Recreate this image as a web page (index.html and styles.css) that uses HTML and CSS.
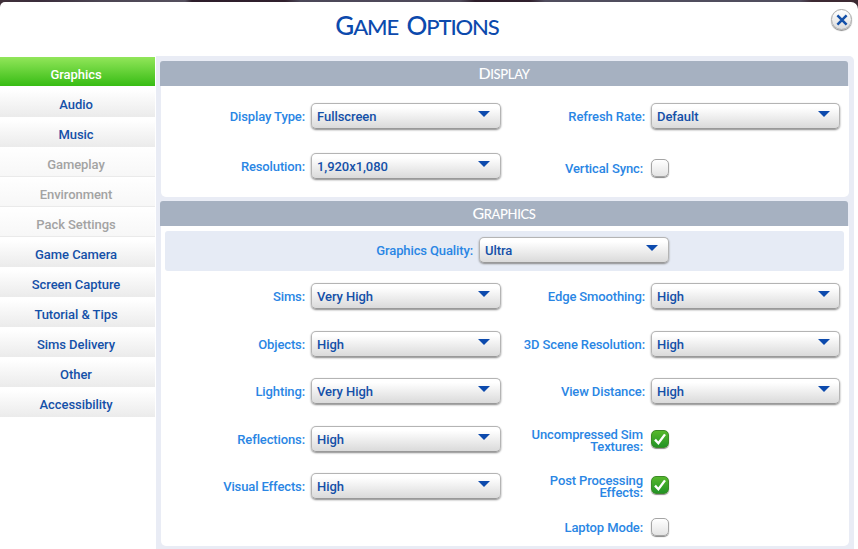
FILE: index.html
```
<!DOCTYPE html>
<html lang="en">
<head>
    <meta charset="UTF-8">
    <meta name="viewport" content="width=device-width, initial-scale=1.0">
    <title>Game Options</title>
    <link rel="stylesheet" href="styles.css">
</head>
<body>
    <div class="dialog">
        <div class="header">
            <h1><span class="cap">G</span>AME <span class="cap">O</span>PTIONS</h1>
            <button class="close">
                <svg width="12" height="12" viewBox="0 0 12 12"><path d="M1.4 1.4L10.6 10.6M10.6 1.4L1.4 10.6" stroke="#1450a8" stroke-width="2.5"/></svg>
            </button>
        </div>
        <div class="main">
            <ul class="menu">
                <li class="active">Graphics</li>
                <li>Audio</li>
                <li>Music</li>
                <li class="disabled">Gameplay</li>
                <li class="disabled">Environment</li>
                <li class="disabled">Pack Settings</li>
                <li>Game Camera</li>
                <li>Screen Capture</li>
                <li>Tutorial &amp; Tips</li>
                <li>Sims Delivery</li>
                <li>Other</li>
                <li>Accessibility</li>
            </ul>
            <div class="content">
                <h2><span class="cap">D</span>ISPLAY</h2>
                <div class="panel display">
                    <div class="cols">
                        <div class="col left">
                            <div class="field"><label>Display Type:</label><div class="select">Fullscreen</div></div>
                            <div class="field"><label>Resolution:</label><div class="select">1,920x1,080</div></div>
                        </div>
                        <div class="col right">
                            <div class="field"><label>Refresh Rate:</label><div class="select">Default</div></div>
                            <div class="field check"><label>Vertical Sync:</label><div class="checkbox"></div></div>
                        </div>
                    </div>
                </div>
                <h2><span class="cap">G</span>RAPHICS</h2>
                <div class="panel graphics">
                    <div class="quality">
                        <div class="field"><label>Graphics Quality:</label><div class="select">Ultra</div></div>
                    </div>
                    <div class="cols">
                        <div class="col left">
                            <div class="field"><label>Sims:</label><div class="select">Very High</div></div>
                            <div class="field"><label>Objects:</label><div class="select">High</div></div>
                            <div class="field"><label>Lighting:</label><div class="select">Very High</div></div>
                            <div class="field"><label>Reflections:</label><div class="select">High</div></div>
                            <div class="field"><label>Visual Effects:</label><div class="select">High</div></div>
                        </div>
                        <div class="col right">
                            <div class="field"><label>Edge Smoothing:</label><div class="select">High</div></div>
                            <div class="field"><label>3D Scene Resolution:</label><div class="select">High</div></div>
                            <div class="field"><label>View Distance:</label><div class="select">High</div></div>
                            <div class="field check">
                                <label>Uncompressed Sim<br>Textures:</label>
                                <div class="checkbox checked"><svg width="14" height="14" viewBox="0 0 14 14"><path d="M2 7.6L5.4 11.2L12 2.4" fill="none" stroke="#fff" stroke-width="2.4"/></svg></div>
                            </div>
                            <div class="field check">
                                <label>Post Processing<br>Effects:</label>
                                <div class="checkbox checked"><svg width="14" height="14" viewBox="0 0 14 14"><path d="M2 7.6L5.4 11.2L12 2.4" fill="none" stroke="#fff" stroke-width="2.4"/></svg></div>
                            </div>
                            <div class="field check"><label>Laptop Mode:</label><div class="checkbox"></div></div>
                        </div>
                    </div>
                </div>
            </div>
        </div>
    </div>
</body>
</html>
```

FILE: styles.css
```
* {
    margin: 0;
    padding: 0;
    box-sizing: border-box;
}
body {
    height: 549px;
    padding-top: 2px;
    overflow: hidden;
    background: linear-gradient(90deg, #40303a 0, #3a2d3b 40px, #4b4452 100px, #55505e 185px, #2d1d2a 192px, #30202d 285px, #4b4758 300px, #504b5b 460px, #2d1d2a 475px, #30202d 530px, #504d5e 545px, #504d5e 800px, #3c2932 812px);
    font-family: Roboto, "Liberation Sans", sans-serif;
    font-size: 13px;
    font-weight: 500;
    letter-spacing: -0.06px;
}
.dialog {
    height: 547px;
    background: #fff;
    border-radius: 5px 7px 0 0;
}
.header {
    display: flex;
    height: 54px;
}
h1 {
    flex: 1;
    padding: 6px 0 0 3px;
    text-align: center;
    font: 500 22px/34px Lato, sans-serif;
    letter-spacing: -1.1px;
    word-spacing: 4px;
    color: #0c4aad;
}
h1 .cap {
    font-size: 26px;
}
.close {
    display: flex;
    align-items: center;
    justify-content: center;
    width: 21px;
    height: 21px;
    margin: 7px 6px 0 0;
    border: 1px solid #a9a9a9;
    border-radius: 50%;
    background: linear-gradient(#fff, #dcdcdc);
    box-shadow: 0 1px 1px #888;
}
.main {
    display: flex;
    height: 493px;
}
.menu {
    width: 155px;
    margin-right: 1px;
    padding-top: 1px;
    list-style: none;
}
.menu li {
    height: 30px;
    padding-right: 3px;
    line-height: 35px;
    text-align: center;
    color: #1450a8;
    background: linear-gradient(#fff 10%, #ebebeb);
}
.menu .active {
    color: #fff;
    background: linear-gradient(#92e65a, #37bc14);
    border-bottom: 1px solid #fff;
}
.menu .disabled {
    color: #a3a3a3;
    background: linear-gradient(#fff, #f7f7f7);
    border-bottom: 1px solid #eaeaea;
}
.content {
    width: 698px;
    padding: 5px 5px 0 4px;
    background: #e9ecf5;
    border-top-right-radius: 5px;
}
h2 {
    width: 688px;
    height: 25px;
    border-radius: 3px 3px 0 0;
    background: #a6b1c1;
    color: #fff;
    text-align: center;
    font: 500 13px/24px Lato, sans-serif;
    letter-spacing: -0.35px;
}
h2 .cap {
    font-size: 16px;
}
.panel {
    width: 688px;
    margin-left: 1px;
    background: #fff;
    border-radius: 0 0 5px 5px;
}
.display {
    height: 111px;
    margin-bottom: 4px;
}
.graphics {
    height: 320px;
    padding-top: 5px;
}
.quality {
    display: flex;
    align-items: flex-start;
    justify-content: flex-end;
    width: 679px;
    height: 40px;
    margin: 0 0 1px 4px;
    padding: 6px 175px 0 0;
    background: #e6ebf5;
    border-radius: 3px;
}
.cols {
    display: flex;
}
.col {
    display: grid;
    align-content: start;
}
.left {
    width: 340px;
}
.right {
    width: 339px;
}
.display .left {
    grid-template-rows: 60px 40px;
}
.display .right {
    grid-template-rows: 60px 44px;
}
.graphics .left {
    grid-template-rows: 48px 48px 46px 50px 44px;
}
.graphics .right {
    grid-template-rows: 48px 48px 46px 51px 41px 42px;
}
.field {
    display: flex;
    align-items: center;
    justify-content: flex-end;
    gap: 6px;
}
.field label {
    padding-top: 1px;
    color: #2a86e4;
    text-align: right;
    line-height: 12px;
    letter-spacing: -0.12px;
    white-space: nowrap;
}
.select {
    display: flex;
    justify-content: space-between;
    width: 190px;
    height: 26px;
    padding: 0 10px 0 5px;
    line-height: 26px;
    color: #1450a8;
    background: linear-gradient(#fff 15%, #dadada);
    border: 1px solid #b4b4b4;
    border-bottom-color: #999;
    border-radius: 5px;
    box-shadow: 0 1px 2px #888;
}
/* drop-down arrow */
.select:after {
    content: "";
    width: 12px;
    height: 6px;
    margin-top: 7px;
    background: #0c4aad;
    clip-path: polygon(0 0, 100% 0, 50% 100%);
}
.right .select {
    width: 189px;
    padding-right: 9px;
}
.check {
    gap: 8px;
    padding-right: 171px;
}
.check label {
    padding-top: 2px;
}
.checkbox {
    display: flex;
    align-items: center;
    justify-content: center;
    width: 18px;
    height: 18px;
    margin-bottom: 1px;
    border: 1px solid #a5a5a5;
    border-radius: 5px;
    background: linear-gradient(#fff, #e4e4e4);
    box-shadow: 0 1px 1px #888;
}
.checked {
    border-color: #3d8a28;
    background: linear-gradient(#56b82c, #229326);
}
```
